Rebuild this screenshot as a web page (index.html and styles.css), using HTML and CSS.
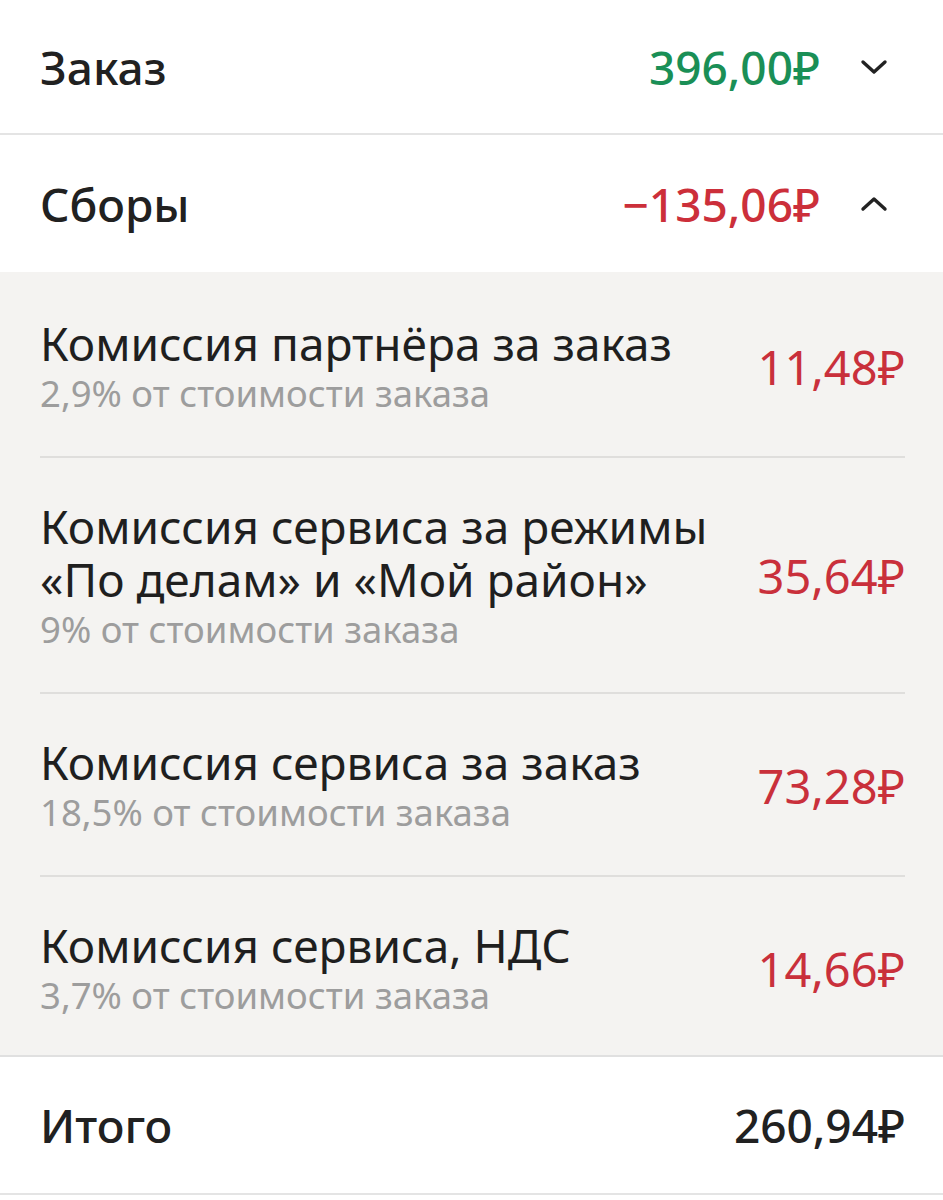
FILE: index.html
```html
<!DOCTYPE html>
<html lang="ru">
<head>
  <meta charset="UTF-8" />
  <meta name="viewport" content="width=device-width, initial-scale=1.0"/>
  <title>Детали заказа</title>
  <link rel="stylesheet" href="styles.css">
</head>
<body>

<div class="receipt">
  <!-- Заказ -->
  <div class="summary-row">
    <div class="summary-label">Заказ</div>
    <div class="summary-value income">396,00₽</div>
    <svg class="chevron" viewBox="0 0 28 16" width="28" height="16">
      <path d="M3 3 L14 13 L25 3" />
    </svg>
  </div>

  <!-- Сборы -->
  <div class="summary-row open">
    <div class="summary-label">Сборы</div>
    <div class="summary-value expense">−135,06₽</div>
    <svg class="chevron" viewBox="0 0 28 16" width="28" height="16">
      <path d="M3 13 L14 3 L25 13" />
    </svg>
  </div>

  <div class="fees">
    <div class="fee">
      <div class="fee-text">
        <div class="fee-title">Комиссия партнёра за заказ</div>
        <div class="fee-note">2,9% от стоимости заказа</div>
      </div>
      <div class="fee-amount">11,48₽</div>
    </div>

    <div class="fee">
      <div class="fee-text">
        <div class="fee-title">Комиссия сервиса за режимы<br>«По делам» и «Мой район»</div>
        <div class="fee-note">9% от стоимости заказа</div>
      </div>
      <div class="fee-amount">35,64₽</div>
    </div>

    <div class="fee">
      <div class="fee-text">
        <div class="fee-title">Комиссия сервиса за заказ</div>
        <div class="fee-note">18,5% от стоимости заказа</div>
      </div>
      <div class="fee-amount">73,28₽</div>
    </div>

    <div class="fee">
      <div class="fee-text">
        <div class="fee-title">Комиссия сервиса, НДС</div>
        <div class="fee-note">3,7% от стоимости заказа</div>
      </div>
      <div class="fee-amount">14,66₽</div>
    </div>
  </div>

  <!-- Итого -->
  <div class="summary-row total">
    <div class="summary-label">Итого</div>
    <div class="summary-value">260,94₽</div>
  </div>
</div>

</body>
</html>
```

FILE: styles.css
```css
* {
  box-sizing: border-box;
}

body {
  margin: 0;
  background: #ffffff;
  font-family: "Noto Sans", Roboto, Arial, sans-serif;
  color: #212121;
}

.receipt {
  width: 943px;
}

.summary-row {
  display: flex;
  align-items: center;
  height: 135px;
  padding: 0 55px 0 40px;
  border-bottom: 2px solid #e4e4e4;
}

.summary-row.open {
  height: 137px;
  border-bottom: none;
}

.summary-row.total {
  height: 140px;
  padding-right: 38px;
  border-top: 2px solid #e0e0e0;
}

.summary-label {
  flex: 1;
  font-size: 46px;
  font-weight: 500;
  line-height: 1;
}

.summary-value {
  font-size: 46px;
  font-weight: 500;
  line-height: 1;
}

.summary-value.income {
  color: #1a8f56;
}

.summary-value.expense {
  color: #cc2f3a;
}

.chevron {
  margin-left: 40px;
  fill: none;
  stroke: #222222;
  stroke-width: 3.4;
  stroke-linecap: round;
  stroke-linejoin: round;
}

.fees {
  background: #f4f3f1;
  padding: 3px 38px 0 40px;
}

.fee {
  display: flex;
  align-items: center;
  padding: 42px 0 40px;
  border-bottom: 2px solid #dfdedc;
}

.fee:last-child {
  border-bottom: none;
  padding-bottom: 37px;
}

.fee-text {
  flex: 1;
}

.fee-title {
  font-size: 46px;
  line-height: 53px;
  color: #1f1f1f;
}

.fee-note {
  font-size: 36.5px;
  line-height: 46px;
  color: #9d9d9d;
}

.fee-amount {
  font-size: 47px;
  color: #c9303b;
}
```
